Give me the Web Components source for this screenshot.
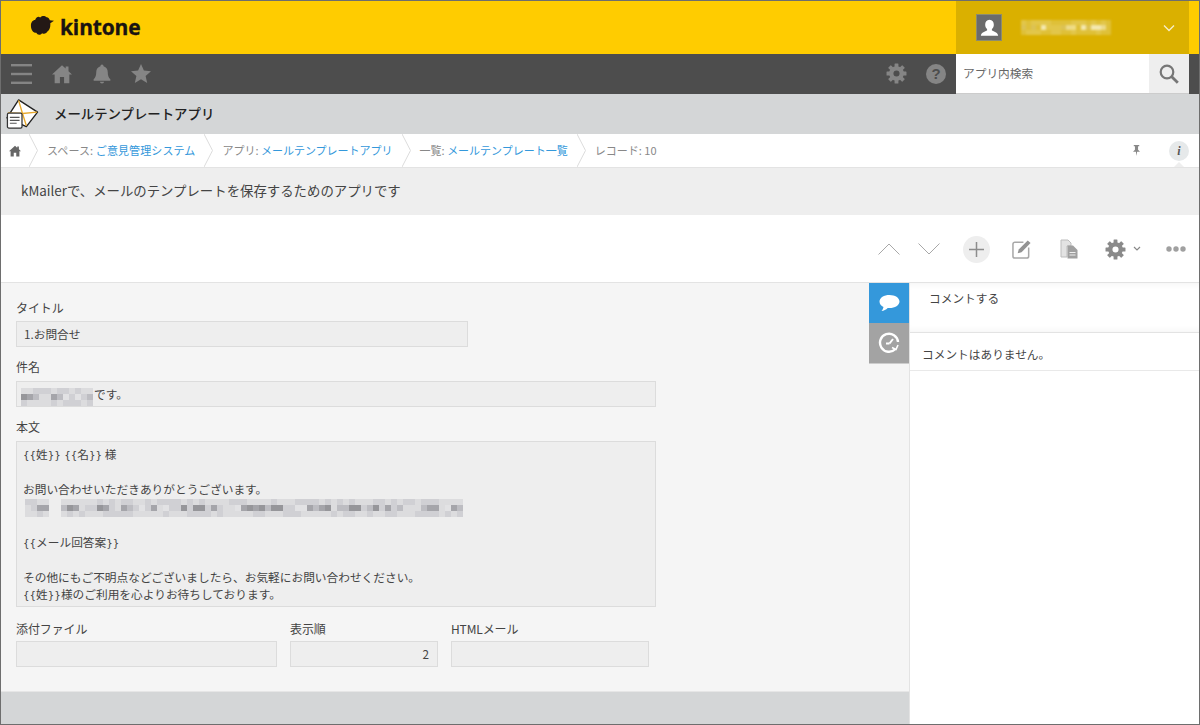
<!DOCTYPE html>
<html lang="ja"><head><meta charset="utf-8"><title>kintone</title>
<style>
html,body{margin:0;padding:0;height:725px;overflow:hidden;background:#fff}
body{font-family:"Noto Sans CJK JP","Noto Sans",sans-serif;color:#333}
</style></head><body>
<kt-app></kt-app>
<script>
const FONT='"Noto Sans CJK JP","Noto Sans",sans-serif';
function gear(size,color){
  let t='';for(let i=0;i<8;i++)t+=`<rect x="9.800" y="0.600" width="4.400" height="5" rx=".6" transform="rotate(${i*45} 12 12)"/>`;
  return `<svg width="${size}" height="${size}" viewBox="0 0 24 24" fill="${color}" style="display:block">${t}<path fill-rule="evenodd" d="M12 3.600a8.400 8.400 0 1 0 0 16.800 8.400 8.400 0 0 0 0-16.800zm0 4.900a3.500 3.500 0 1 1 0 7 3.500 3.500 0 0 1 0-7z"/></svg>`;
}
const HOME=(w,c)=>`<svg width="${w}" height="${w}" viewBox="0 0 24 24" fill="${c}" style="display:block"><path d="M12 1.500 0 12.500h3.200V23h6.300v-7.500h5V23h6.300V12.500H24l-4.200-3.900V3h-3.400v2.400z"/></svg>`;

class KtMosaic extends HTMLElement{
  connectedCallback(){
    const w=+this.getAttribute('w'),h=+this.getAttribute('h'),cell=+(this.getAttribute('cell')||6);
    const cols=(this.getAttribute('colors')||'#d0d0d4,#bdbdc2,#dcdcde,#a5a5aa,#e2e2e4,#96969a').split(',');
    const blur=this.getAttribute('blur')||'.5';
    let seed=+(this.getAttribute('seed')||7),r='';
    const rnd=()=>(seed=(seed*9301+49297)%233280)/233280;
    const gap=(this.getAttribute('gaps')||'').split(',').filter(Boolean).map(s=>s.split('-').map(Number));
    for(let y=0;y<h;y+=cell)for(let x=0;x<w;x+=cell){
      if(gap.some(g=>x>=g[0]&&x<g[1]))continue;
      const v=rnd();const edge=(y===0||y+cell>=h);
      let c=cols[Math.floor(v*cols.length)];
      if(edge)c=cols[v<.5?0:2];
      r+=`<rect x="${x}" y="${y}" width="${cell}" height="${cell}" fill="${c}"/>`;
    }
    this.attachShadow({mode:'open'}).innerHTML=`<style>:host{display:inline-block;line-height:0;vertical-align:middle}svg{display:block;overflow:visible}g{filter:blur(${blur}px)}</style><svg width="${w}" height="${h}" aria-hidden="true"><g>${r}</g></svg>`;
  }
}
customElements.define('kt-mosaic',KtMosaic);

class KtHeader extends HTMLElement{
  connectedCallback(){
    this.attachShadow({mode:'open'}).innerHTML=`<style>
:host{display:flex;height:53px;background:#fc0;justify-content:space-between}
.logo{display:flex;align-items:center;gap:6px;padding-left:29px;font:700 21px/1 "Open Sans",sans-serif;color:#1a1311;letter-spacing:-.15px;-webkit-text-stroke:.35px #1a1311}
.logo svg{position:relative;top:-1px}
.user{width:233px;margin-right:10px;background:#dab000;display:flex;align-items:center;box-sizing:border-box;padding-left:20px}
.av{width:26px;height:27px;background:#6b6b6b;border:.5px solid #8c8c70;box-sizing:border-box}
.av svg{display:block}
kt-mosaic{margin-left:19px}
.chev{margin-left:auto;margin-right:14px}
</style>
<div class="logo"><svg width="24" height="21" viewBox="0 1.500 26 18.500" preserveAspectRatio="none"><path fill="#231815" d="M1 10c0-3 2-5 4.500-5C7 2.500 9 1.500 11 2.800 13 1 16 1 18 2.600c2 .2 3 1.300 3.500 2.700l4.500.3-4 2.200c.3 3-.6 6-2.900 7.200-1.300 2-4 2.700-6 1.600-2 2-5 1.900-6.300-.3C3.500 16.500 1 13.500 1 10z"/></svg><span>kintone</span></div>
<div class="user"><div class="av"><svg width="25" height="26" viewBox="0 0 26 26"><path fill="#fff" d="M13 4.500c-3 0-4.500 2.300-4.500 5 0 2 .8 3.600 2 4.600v1.600c-2 1-6 1.800-6.500 5.300h18c-.5-3.500-4.500-4.300-6.500-5.300v-1.600c1.200-1 2-2.600 2-4.600 0-2.700-1.500-5-4.500-5z"/></svg></div>
<kt-mosaic w="90" h="15" cell="5" seed="31" blur="1.100" colors="#e2c64a,#efdc84,#dfc038,#f4e8b0,#dcc254,#ecda8a"></kt-mosaic>
<svg class="chev" width="12" height="8" viewBox="0 0 12 8"><path d="M1 1.500 6 6.500 11 1.500" fill="none" stroke="#f6eecb" stroke-width="1.300"/></svg></div>`;
  }
}
customElements.define('kt-header',KtHeader);

class KtNav extends HTMLElement{
  connectedCallback(){
    const c='#858585';
    this.attachShadow({mode:'open'}).innerHTML=`<style>
:host{display:flex;height:40px;background:#4d4d4d;align-items:center}
.l{display:flex;align-items:center;padding-left:10px;flex:1;margin-top:-1px}
.r{display:flex;align-items:center;gap:19px;padding-right:10px;margin-top:-1px}
.q{width:20px;height:20px;border-radius:50%;background:${c};color:#4d4d4d;font:700 15px/20px "Liberation Sans",sans-serif;text-align:center}
.search{width:233px;height:40px;background:#fff;display:flex;margin-right:10px;border-bottom:1px solid #ccc;box-sizing:border-box}
.txt{flex:1;font-size:11.700px;line-height:38px;padding-left:7px;color:#666}
.btn{width:40px;background:#eee;display:flex;align-items:center;justify-content:center}
</style>
<div class="l">
<svg width="21" height="20" viewBox="0 0 21 20" fill="${c}"><rect y="0" width="21" height="2.400"/><rect y="8.800" width="21" height="2.400"/><rect y="17.600" width="21" height="2.400"/></svg>
<span style="margin-left:20px">${HOME(20,c)}</span>
<svg style="margin-left:21px" width="18" height="20" viewBox="0 0 20 21" fill="${c}"><path d="M10 0c-1.100 0-1.700.8-1.700 1.800C5 2.700 3.600 5.400 3.600 8.500c0 3.500-.8 6-2.900 7.900V18h18.600v-1.600c-2.100-1.900-2.900-4.400-2.900-7.900 0-3.100-1.400-5.800-4.700-6.700C11.700.8 11.100 0 10 0zM7.700 19a2.300 2 0 0 0 4.600 0z"/></svg>
<svg style="margin-left:20px" width="20" height="20" viewBox="0 0 20 20" fill="${c}"><path d="m10 0 2.900 6.600 7.100.7-5.400 4.700 1.600 7L10 15.300 3.800 19l1.600-7L0 7.300l7.100-.7z"/></svg>
</div>
<div class="r">${gear(21,c)}<div class="q">?</div></div>
<div class="search"><div class="txt">アプリ内検索</div><div class="btn"><svg width="20" height="20" viewBox="0 0 20 20" fill="none" stroke="#777"><circle cx="8" cy="8" r="6.300" stroke-width="2.200"/><path d="m12.500 12.500 6.300 6.300" stroke-width="2.800"/></svg></div></div>`;
  }
}
customElements.define('kt-nav',KtNav);

class KtAppbar extends HTMLElement{
  connectedCallback(){
    this.attachShadow({mode:'open'}).innerHTML=`<style>
:host{display:flex;height:40px;background:#d4d6d7;align-items:center;padding-left:4px}
h1{font-size:13.400px;font-weight:500;margin:0 0 0 15px;color:#222;line-height:1}
svg{display:block;flex:none}
</style>
<svg width="34" height="33" viewBox="0 0 35 33"><path d="M14 1.500 33.500 14 22 29 2 20z" fill="#fff" stroke="#222" stroke-width="1.400" stroke-linejoin="round"/><path d="M3 15 18 15.500 33 14M14 2l4 13.500L22 28" fill="none" stroke="#e8a92c" stroke-width="1.400"/><rect x="2.500" y="15" width="15" height="15.500" rx="1.500" fill="#fff" stroke="#333" stroke-width="1.300"/><path d="M5 19.500h10M5 22.500h10M5 25.500h7" stroke="#555" stroke-width="1.200"/></svg>
<h1>メールテンプレートアプリ</h1>`;
  }
}
customElements.define('kt-appbar',KtAppbar);

class KtCrumb extends HTMLElement{
  connectedCallback(){
    const pre=this.getAttribute('pre')||'',link=this.getAttribute('link')||'';
    const last=this.hasAttribute('last');
    this.attachShadow({mode:'open'}).innerHTML=`<style>
:host{display:flex;align-items:center;height:33px}
.t{padding:0 9px;font-size:11px;color:#888;white-space:nowrap;position:relative;top:-1px;letter-spacing:var(--ls,0)}
a{color:#3498db;text-decoration:none}
svg{display:block}
</style><div class="t">${pre}<slot></slot>${link?`<a>${link}</a>`:''}</div>${last?'':`<svg width="9" height="33" viewBox="0 0 9 33"><path d="M0 0 8.500 16.500 0 33" fill="none" stroke="#dcdcdc"/></svg>`}`;
  }
}
customElements.define('kt-crumb',KtCrumb);

class KtBreadcrumb extends HTMLElement{
  connectedCallback(){
    this.attachShadow({mode:'open'}).innerHTML=`<style>
:host{display:flex;height:34px;box-sizing:border-box;background:#fff;border-bottom:1px solid #e3e3e3;align-items:center}
.home{display:flex;align-items:center;height:33px;padding-left:8px;gap:8px}
.right{margin-left:auto;display:flex;align-items:center;gap:29px;padding-right:10px}
.i{width:20px;height:20px;border-radius:50%;background:#e6e9ea;font:italic 700 12px/20px "Liberation Serif",serif;text-align:center;color:#555;position:relative}
.i:after{content:"";position:absolute;left:5px;top:21px;border:5px solid transparent;border-top:0;border-bottom:5px solid #eee}
svg{display:block}
</style>
<div class="home">${HOME(12,'#666')}<svg width="9" height="33" viewBox="0 0 9 33"><path d="M0 0 8.500 16.500 0 33" fill="none" stroke="#dcdcdc"/></svg></div>
<kt-crumb pre="スペース: " link="ご意見管理システム" style="--ls:.1px"></kt-crumb>
<kt-crumb pre="アプリ: " link="メールテンプレートアプリ"></kt-crumb>
<kt-crumb pre="一覧: " link="メールテンプレート一覧"></kt-crumb>
<kt-crumb pre="レコード: 10" last></kt-crumb>
<div class="right"><svg width="7" height="13" viewBox="0 0 9 14" fill="#888"><path d="M1 0h7v1.500H6.500V6L9 8.500H5.300L4.500 14 3.700 8.500H0L2.500 6V1.500H1z"/></svg><div class="i">i</div></div>`;
  }
}
customElements.define('kt-breadcrumb',KtBreadcrumb);

class KtDesc extends HTMLElement{
  connectedCallback(){
    this.attachShadow({mode:'open'}).innerHTML=`<style>
:host{display:flex;height:47px;background:#eee;align-items:center;padding-left:20px;font-size:13.400px;color:#444;padding-bottom:3px;box-sizing:border-box}
</style><slot></slot>`;
  }
}
customElements.define('kt-desc',KtDesc);

class KtToolbar extends HTMLElement{
  connectedCallback(){
    const s='#a8a8a8';
    this.attachShadow({mode:'open'}).innerHTML=`<style>
:host{display:flex;height:68px;box-sizing:border-box;background:#fff;border-bottom:1px solid #e3e3e3;align-items:center;justify-content:flex-end;padding-right:13px;padding-top:1px}
svg{display:block}
.plus{width:27px;height:27px;border-radius:50%;background:#eee;display:flex;align-items:center;justify-content:center;margin-left:23px}
</style>
<svg width="22" height="12" viewBox="0 0 22 12"><path d="M.5 11.500 11 1l10.500 10.500" fill="none" stroke="${s}" stroke-width="1"/></svg>
<svg style="margin-left:18px" width="22" height="12" viewBox="0 0 22 12"><path d="M.5.500 11 11 21.500.500" fill="none" stroke="${s}" stroke-width="1"/></svg>
<div class="plus"><svg width="15" height="15" viewBox="0 0 15 15"><path d="M7.500 0v15M0 7.500h15" stroke="#8d8d8d" stroke-width="1.500"/></svg></div>
<svg style="margin-left:22px" width="20" height="20" viewBox="0 0 21 21" fill="none"><path d="M12 3.500H3A2 2 0 0 0 1 5.500v12.500a2 2 0 0 0 2 2h12.500a2 2 0 0 0 2-2V9" stroke="${s}" stroke-width="1.600"/><path d="M7 11 16.500 1.500l3 2.800L10 14l-4 1z" fill="#939393"/></svg>
<svg style="margin-left:28px" width="18" height="20" viewBox="0 0 18 20"><path d="M1 1h7l3 3v3H7v11H1z" fill="#e3e3e3" stroke="#bdbdbd"/><path d="M7.500 6.500H13l4.500 4.500V19.500H7.500z" fill="#a0a0a0"/><path d="M9.500 13.500h6M9.500 16h6" stroke="#eee"/></svg>
<span style="margin-left:27px">${gear(21,'#8a8a8a')}</span>
<svg style="margin-left:7px" width="8" height="6" viewBox="0 0 8 6"><path d="M1 1l3 3 3-3" fill="none" stroke="#888" stroke-width="1.200"/></svg>
<svg style="margin-left:25px" width="20" height="6" viewBox="0 0 20 6" fill="#a0a0a0"><circle cx="3" cy="3" r="2.700"/><circle cx="10" cy="3" r="2.700"/><circle cx="17" cy="3" r="2.700"/></svg>`;
  }
}
customElements.define('kt-toolbar',KtToolbar);

class KtField extends HTMLElement{
  connectedCallback(){
    const label=this.getAttribute('label'),w=this.getAttribute('w'),h=this.getAttribute('h')||26;
    const right=this.hasAttribute('right'),multi=this.hasAttribute('multi');
    this.attachShadow({mode:'open'}).innerHTML=`<style>
:host{display:block;width:${w}px;font-size:11.700px;color:#444}
.l{height:18px;line-height:18px;margin-top:-2px;margin-bottom:var(--label-gap,5px);font-size:12px;letter-spacing:-.01em}
.v{box-sizing:border-box;width:${w}px;height:${h}px;background:#eee;border:1px solid #dcdcdc;color:#444;overflow:hidden;
 ${multi?'padding:3px 7px;line-height:17.500px;':`padding:0 ${right?'8px':'7px'};line-height:24px;${right?'text-align:right;':''}`}}
</style><div class="l">${label}</div><div class="v"><slot></slot></div>`;
  }
}
customElements.define('kt-field',KtField);

class KtForm extends HTMLElement{
  connectedCallback(){
    this.attachShadow({mode:'open'}).innerHTML=`<style>
:host{display:flex;flex-direction:column;position:relative;width:908px;height:441px;background:#f5f5f5;box-sizing:border-box;flex:none}
.body{flex:1;padding:18px 15px 0;display:flex;flex-direction:column;gap:13px}
.foot{height:33px;background:#d4d6d7;border-top:1px solid #e6e6e6;box-sizing:border-box}
.tabs{position:absolute;top:0;right:0;width:40px}
.tab{height:40px;display:flex;align-items:center;justify-content:center;background:#3498db}
.tab.g{background:#a3a3a3;height:41px;border-bottom:1px solid #ccc;box-sizing:border-box}
</style>
<div class="body"><slot></slot></div>
<div class="foot"></div>
<div class="tabs">
<div class="tab"><svg width="21" height="18" viewBox="0 0 21 18"><path fill="#fff" d="M10.500 1C5 1 .5 3.700.5 7.500c0 2.300 1.600 4.300 4 5.500-.3 1.500-1 3-2 4 2.300-.3 4.600-1.300 6.200-3 .6.100 1.200.1 1.800.1 5.500 0 10-2.900 10-6.600S16 1 10.500 1z"/></svg></div>
<div class="tab g"><svg width="22" height="22" viewBox="0 0 22 22" fill="none" stroke="#fff" stroke-width="2.400"><path d="M17.500 17A9 9 0 1 1 20 10"/><path d="M11.500 11.500 15 7" stroke-width="2"/><path d="M8 11.500h3.500" stroke-width="2"/><path d="M14 15.500l4 2 2-4.500" stroke-width="1.600"/></svg></div>
</div>`;
  }
}
customElements.define('kt-form',KtForm);

class KtRow extends HTMLElement{
  connectedCallback(){
    this.attachShadow({mode:'open'}).innerHTML=`<style>:host{display:flex;gap:13px;margin-top:2px;--label-gap:3px}</style><slot></slot>`;
  }
}
customElements.define('kt-row',KtRow);

class KtComments extends HTMLElement{
  connectedCallback(){
    this.attachShadow({mode:'open'}).innerHTML=`<style>
:host{display:block;flex:1;background:#fff;border-left:1px solid #e3e3e3;font-size:11.700px;color:#444}
.box{height:50px;box-sizing:border-box;border-bottom:1px solid #e3e3e3;padding:6px 0 0 19px;line-height:18px;box-shadow:inset 0 -8px 8px -8px #f0f0f0,inset 0 8px 8px -8px #f0f0f0}
.none{height:38px;box-sizing:border-box;border-bottom:1px solid #e9e9e9;padding-left:12px;line-height:41px;white-space:nowrap}
</style><div class="box">コメントする</div><div class="none">コメントはありません。</div>`;
  }
}
customElements.define('kt-comments',KtComments);

class KtApp extends HTMLElement{
  connectedCallback(){
    this.attachShadow({mode:'open'}).innerHTML=`<style>
:host{display:block;width:1200px;height:725px;box-sizing:border-box;border:1px solid #6e6e6e;overflow:hidden;font-family:${FONT};background:#fff}
.main{display:flex;height:441px}
.b{font-family:"DejaVu Sans",sans-serif;font-size:10.300px;line-height:1}
.m{margin-left:-1px;height:17.500px}
</style>
<kt-header></kt-header><kt-nav></kt-nav><kt-appbar></kt-appbar><kt-breadcrumb></kt-breadcrumb>
<kt-desc>kMailerで、メールのテンプレートを保存するためのアプリです</kt-desc>
<kt-toolbar></kt-toolbar>
<div class="main">
<kt-form>
 <kt-field label="タイトル" w="452" style="--label-gap:4px">1.お問合せ</kt-field>
 <kt-field label="件名" w="640"><kt-mosaic w="72" h="16" cell="6" seed="11" blur=".7" style="margin-left:-3px;margin-right:1px"></kt-mosaic>です。</kt-field>
 <kt-field label="本文" w="640" h="166" multi>
  <div class="m"><span class="b">{{</span>姓<span class="b">}} {{</span>名<span class="b">}}</span> 様</div><div class="m">&nbsp;</div>
  <div class="m">お問い合わせいただきありがとうございます。</div>
  <div class="m"><kt-mosaic w="436" h="15" cell="6" seed="57" gaps="24-36" style="margin-left:2px;display:block;padding-top:1px"></kt-mosaic></div>
  <div class="m">&nbsp;</div><div class="m"><span class="b">{{</span>メール回答案<span class="b">}}</span></div><div class="m">&nbsp;</div>
  <div class="m">その他にもご不明点などございましたら、お気軽にお問い合わせください。</div>
  <div class="m"><span class="b">{{</span>姓<span class="b">}}</span>様のご利用を心よりお待ちしております。</div>
 </kt-field>
 <kt-row>
  <kt-field label="添付ファイル" w="261"></kt-field>
  <kt-field label="表示順" w="148" right>2</kt-field>
  <kt-field label="HTMLメール" w="198"></kt-field>
 </kt-row>
</kt-form>
<kt-comments></kt-comments>
</div>`;
  }
}
customElements.define('kt-app',KtApp);
</script>
</body></html>
